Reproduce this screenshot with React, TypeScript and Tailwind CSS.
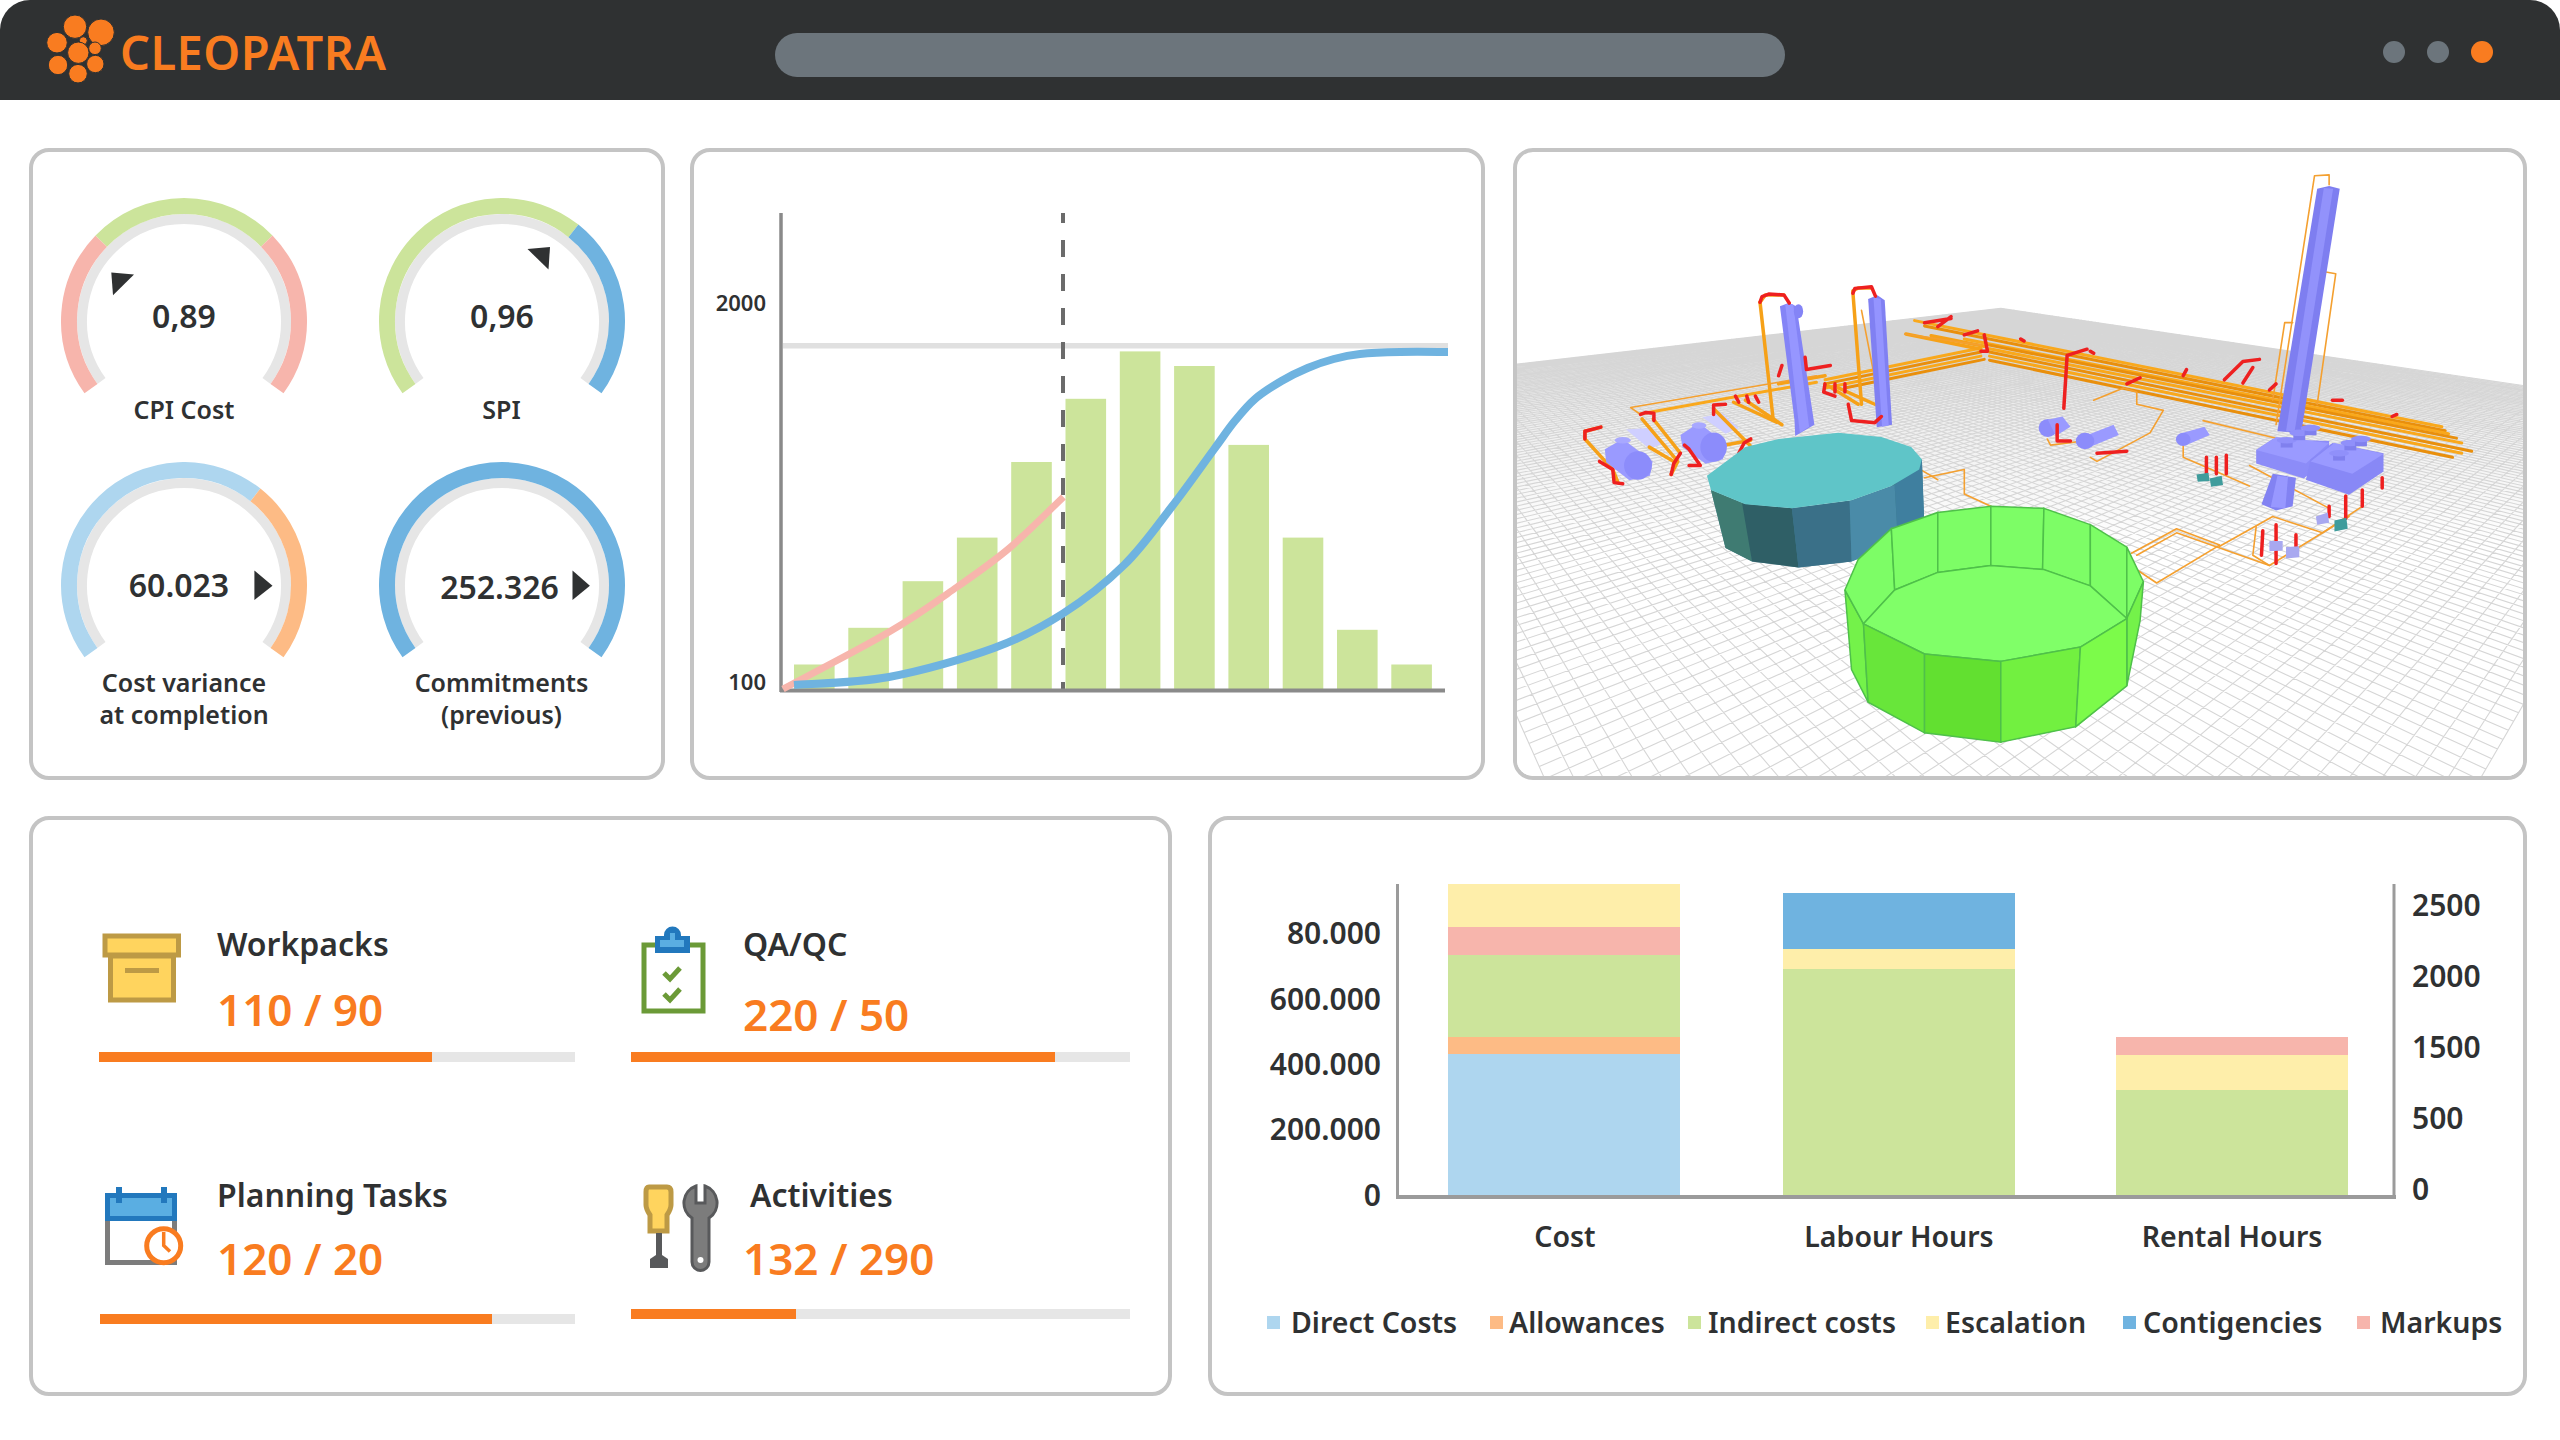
import React from "react";

const ORANGE = "#f97c20";
const GREEN = "#cce49b";
const PINK = "#f7b5ac";
const BLUE = "#6fb3e0";
const LIGHT_BLUE = "#aed6ef";
const PEACH = "#fdbb85";
const YELLOW = "#feeeaa";
const INK = "#2f3132";

const point = (r: number, deg: number) => {
  const t = (deg * Math.PI) / 180;
  return [130 - r * Math.cos(t), 123 - r * Math.sin(t)];
};

const arc = (r: number, from: number, to: number) => {
  const [x0, y0] = point(r, from);
  const [x1, y1] = point(r, to);
  return `M${x0} ${y0}A${r} ${r} 0 ${to - from > 180 ? 1 : 0} 1 ${x1} ${y1}`;
};

type GaugeProps = {
  segments: [number, number, string][];
  pointer: string;
  value: string;
  valueX: number;
  valueY: number;
  label: string[];
  labelClass: string;
};

function Gauge({ segments, pointer, value, valueX, valueY, label, labelClass }: GaugeProps) {
  return (
    <div className="w-[260px]">
      <svg width="260" height="196" viewBox="0 0 260 196" className="block">
        <path d={arc(102, -36, 216)} fill="none" stroke="#e6e6e6" strokeWidth="10" />
        {segments.map(([a, b, c]) => (
          <path key={a} d={arc(115, a, b)} fill="none" stroke={c} strokeWidth="16" />
        ))}
        <polygon points={pointer} fill={INK} />
        <text x={valueX} y={valueY} textAnchor="middle" dominantBaseline="central" className="text-[32px] font-semibold fill-[#2f3132]">
          {value}
        </text>
      </svg>
      <div className={`text-center text-[25px] leading-[32px] font-semibold text-[#2f3132] ${labelClass}`}>
        {label.map((l) => (
          <div key={l}>{l}</div>
        ))}
      </div>
    </div>
  );
}

function GaugePanel() {
  return (
    <section className="w-[636px] h-[632px] shrink-0 border-4 border-[#c4c4c4] rounded-[20px] pt-[46px] pl-[21px]">
      <div className="grid grid-cols-[260px_260px] gap-x-[57.5px] gap-y-[37px]">
        <Gauge
          segments={[[-36, 44, PINK], [44, 136, GREEN], [136, 216, PINK]]}
          pointer="57.3,74.5 80,76.5 59,97.3"
          value="0,89"
          valueX={130}
          valueY={117}
          label={["CPI Cost"]}
          labelClass="-mt-[1px]"
        />
        <Gauge
          segments={[[-36, 128.4, GREEN], [128.4, 216, BLUE]]}
          pointer="155.5,51 178,49 176.5,71.6"
          value="0,96"
          valueX={130}
          valueY={117}
          label={["SPI"]}
          labelClass="-mt-[1px]"
        />
        <Gauge
          segments={[[-36, 128.4, LIGHT_BLUE], [128.4, 216, PEACH]]}
          pointer="200.4,108.6 218.5,123.7 200.4,138"
          value="60.023"
          valueX={125}
          valueY={122}
          label={["Cost variance", "at completion"]}
          labelClass="mt-[8px]"
        />
        <Gauge
          segments={[[-36, 216, BLUE]]}
          pointer="200.5,108.6 217.9,123.7 200.5,138"
          value="252.326"
          valueX={127.5}
          valueY={124}
          label={["Commitments", "(previous)"]}
          labelClass="mt-[8px]"
        />
      </div>
    </section>
  );
}

// catmull-rom through the points, good enough for the s-curves
const smooth = (pts: number[][]) => {
  let d = `M${pts[0][0]} ${pts[0][1]}`;
  for (let i = 0; i < pts.length - 1; i++) {
    const p0 = pts[i - 1] || pts[i];
    const p1 = pts[i];
    const p2 = pts[i + 1];
    const p3 = pts[i + 2] || p2;
    d += `C${p1[0] + (p2[0] - p0[0]) / 6} ${p1[1] + (p2[1] - p0[1]) / 6} ${p2[0] - (p3[0] - p1[0]) / 6} ${p2[1] - (p3[1] - p1[1]) / 6} ${p2[0]} ${p2[1]}`;
  }
  return d;
};

const curveTops = [664.5, 627.8, 581.2, 537.6, 462, 398.8, 351.4, 366, 444.9, 537.6, 629.8, 664.5];

function CurvePanel() {
  return (
    <section className="w-[795px] h-[632px] shrink-0 ml-[25px] border-4 border-[#c4c4c4] rounded-[20px]">
      <svg viewBox="694 152 787 624" className="block w-full h-full">
        <rect x="783" y="343" width="665" height="5.5" fill="#e0e0e0" />
        {curveTops.map((top, i) => (
          <rect key={i} x={794 + i * 54.3} y={top} width="40.6" height={690 - top} fill={GREEN} />
        ))}
        <path d="M1063 213V690" stroke="#6b6b6b" strokeWidth="4" strokeDasharray="17 17" strokeDashoffset="7" />
        <path d="M781 213V692" stroke="#8a8a8a" strokeWidth="3.5" />
        <path d="M780 690.5H1445" stroke="#8a8a8a" strokeWidth="4" />
        <path
          d={smooth([[783, 689], [889, 632], [957, 587], [1009.5, 548], [1063.4, 497]])}
          fill="none"
          stroke={PINK}
          strokeWidth="7"
        />
        <path
          d={smooth([[794, 685], [889, 677], [994, 648], [1063, 613.5], [1124.6, 564.5], [1171.6, 507], [1213.5, 450], [1234.4, 421.6], [1255, 399], [1281.5, 381], [1307.6, 368], [1333.8, 359], [1360, 354], [1400, 352], [1448, 352]])}
          fill="none"
          stroke={BLUE}
          strokeWidth="8"
        />
        <text x="766" y="302" textAnchor="end" dominantBaseline="central" className="text-[22px] font-semibold fill-[#2f3132]">2000</text>
        <text x="766" y="680.5" textAnchor="end" dominantBaseline="central" className="text-[22px] font-semibold fill-[#2f3132]">100</text>
      </svg>
    </section>
  );
}

// floor plane: unit square to the four corners of the slab
const project = (() => {
  const [x0, y0, x1, y1, x2, y2, x3, y3] = [755, 415, 1800, 666, 680, 3800, -200, 593.5];
  const sx = x0 - x1 + x2 - x3;
  const sy = y0 - y1 + y2 - y3;
  const dx1 = x1 - x2;
  const dx2 = x3 - x2;
  const dy1 = y1 - y2;
  const dy2 = y3 - y2;
  const den = dx1 * dy2 - dx2 * dy1;
  const g = (sx * dy2 - dx2 * sy) / den;
  const h = (dx1 * sy - sx * dy1) / den;
  return (u: number, v: number) => {
    const w = g * u + h * v + 1;
    return [
      ((x1 - x0 + g * x1) * u + (x3 - x0 + h * x3) * v + x0) / w,
      ((y1 - y0 + g * y1) * u + (y3 - y0 + h * y3) * v + y0) / w,
    ];
  };
})();

const GRID = 130;
const gridPath = Array.from({ length: GRID + 1 }, (_, i) => {
  const t = i / GRID;
  const a = project(t, 0);
  const b = project(t, 1);
  const c = project(0, t);
  const d = project(1, t);
  return `M${a[0]} ${a[1]}L${b[0]} ${b[1]}M${c[0]} ${c[1]}L${d[0]} ${d[1]}`;
}).join("");

const mainPipes = [
  "M625 445L1420 705",
  "M640 458L1425 715",
  "M700 490L1430 722",
  "M738 505L1442 733",
  "M738 514L1450 745",
  "M738 522L1465 765",
  "M738 532L1450 770",
  "M738 542L1436 780",
  "M725 512L490 590",
  "M725 522L490 600",
  "M725 532L490 610",
  "M730 540L520 610",
  "M477 596L211 674",
];

const thickPipes = [
  "M612 478L725 515",
  "M650 482L730 508",
  "M490 580L420 600",
  "M152 706L128 716L128 735L170 810L178 842",
  "M214 686L268 790L258 822",
  "M231 686L271 768",
  "M322 661L377 751",
  "M352 645L417 694",
  "M370 640L425 700",
  "M490 600L540 650",
  "M510 610L565 650",
  "M392 400L412 690",
  "M532 375L545 650",
  "M392 400L400 382L428 382",
  "M532 372L540 365L560 365",
  "M225 755L262 790",
  "M340 750L378 738",
];

const thinPipes = [
  "M1170 700L1228 90L1250 88L1250 112",
  "M1232 650L1260 330L1245 326",
  "M1165 640L1183 450L1195 450",
  "M725 505L610 478",
  "M477 580L197 658L212 675",
  "M640 830L700 810L700 870L740 900",
  "M636 812L660 835",
  "M952 1015L1020 955L1085 995L990 1088L955 1050",
  "M960 1020L1020 965L1160 1045L1280 925",
  "M1165 925L1085 998",
  "M1060 690L1175 735",
  "M1030 745L1030 780L1130 850",
  "M1130 800L1250 905",
  "M1165 925L1240 965L1300 900",
  "M895 640L940 610L960 620L960 650L1000 665L980 720L900 790L890 780",
  "M825 735L830 750L880 740",
  "M1140 950L1135 1020L1160 1045",
  "M445 460L470 690",
  "M545 420L575 670",
];

const redPipes = [
  "M152 706L128 716L128 735",
  "M150 790L170 810L172 842L185 845",
  "M212 675L220 670L232 672L232 690",
  "M258 822L262 795L272 770",
  "M285 800L302 800L285 760L278 750",
  "M378 735L368 745L360 770",
  "M322 675L322 652L340 650",
  "M355 630L360 645M372 630L375 645M385 630L390 645",
  "M392 400L395 386L405 380L428 382L436 402",
  "M532 378L535 366L560 362L566 385",
  "M490 600L488 620L505 630M505 600L505 620M520 600L520 620",
  "M525 650L530 690L565 695L575 680",
  "M460 535L462 565L498 555",
  "M420 580L425 555",
  "M640 450L680 440M660 460L680 435",
  "M730 480L735 520L725 520",
  "M850 660L855 530L885 515",
  "M1092 590L1120 545L1145 540",
  "M1120 598L1135 560",
  "M1160 615L1170 600",
  "M945 600L965 585",
  "M1030 580L1035 565",
  "M1255 640L1270 640",
  "M1345 680L1352 675",
  "M840 700L840 740L860 740",
  "M900 770L945 765",
  "M1065 780L1065 820M1080 780L1080 820M1095 775L1095 820",
  "M1150 960L1148 1020M1170 945L1170 1040M1200 970L1200 1020",
  "M1250 900L1250 925M1275 875L1275 930M1300 860L1300 900M1330 830L1330 855",
  "M700 480L720 470M790 495L785 490M895 525L890 520",
];

const Line = ({ d, color, width }: { d: string; color: string; width: number }) => (
  <path d={d} fill="none" stroke={color} strokeWidth={width} strokeLinejoin="round" strokeLinecap="round" vectorEffect="non-scaling-stroke" />
);

const Face = ({ points, fill }: { points: string; fill: string }) => (
  <polygon points={points} fill={fill} stroke="#4fc04a" strokeWidth="1.5" vectorEffect="non-scaling-stroke" />
);

function PlantPanel() {
  return (
    <section className="w-[1014px] h-[632px] shrink-0 ml-[28px] border-4 border-[#c4c4c4] rounded-[20px] overflow-hidden">
      {/* traced in a 1568-wide frame, hence the stretched viewBox */}
      <svg viewBox="25.6 31.85 1516.7 1529" preserveAspectRatio="none" className="block w-full h-full">
        <defs>
          <linearGradient id="floorFade" x1="0" y1="415" x2="0" y2="1000" gradientUnits="userSpaceOnUse">
            <stop offset="0" stopColor="#d6d6d6" />
            <stop offset="0.4" stopColor="#ececec" />
            <stop offset="1" stopColor="#ffffff" />
          </linearGradient>
        </defs>
        <polygon points="755,415 1800,666 1800,1600 -200,1600 -200,593.5" fill="url(#floorFade)" />
        <path d={gridPath} fill="none" stroke="#d6d6d6" strokeWidth="1.1" vectorEffect="non-scaling-stroke" />

        <polygon points="190,712 225,708 246,745 226,760" fill="#cfcfff" />
        <polygon points="305,682 335,672 360,708 340,722" fill="#cfcfff" />
        {mainPipes.map((d, i) => (
          <Line key={d} d={d} color={i % 2 ? "#e98f0c" : "#f9a81c"} width={3} />
        ))}
        {thickPipes.map((d) => (
          <Line key={d} d={d} color="#f6a118" width={3.5} />
        ))}
        {thinPipes.map((d) => (
          <Line key={d} d={d} color="#f4a030" width={1.6} />
        ))}

        {/* columns */}
        <polygon points="422,410 435,402 447,410 474,700 445,728 444,690" fill="#8484f6" />
        <polygon points="430,405 442,405 466,705 452,720" fill="#9696ff" />
        <ellipse cx="450" cy="422" rx="7" ry="17" fill="#8484f6" />
        <polygon points="555,392 569,383 580,395 591,700 568,706" fill="#8080f2" />
        <polygon points="563,388 574,392 586,702 576,705" fill="#9494ff" />
        <polygon points="1232,122 1250,115 1266,122 1208,720 1172,716" fill="#7e7ef0" />
        <polygon points="1242,120 1256,122 1198,716 1185,716" fill="#9292fb" />
        <polygon points="1165,820 1200,830 1195,900 1170,910 1148,895" fill="#8282f2" />
        <polygon points="1172,825 1188,828 1184,905 1162,902" fill="#9898ff" />

        {/* vessels */}
        <polygon points="158,760 185,735 230,790 226,825 195,836 160,792" fill="#9a9aff" />
        <ellipse cx="208" cy="800" rx="21" ry="35" fill="#8c8cfb" />
        <ellipse cx="185" cy="738" rx="12" ry="8" fill="#a8a8ff" />
        <polygon points="272,725 300,695 342,750 336,785 310,796 275,755" fill="#9a9aff" />
        <ellipse cx="322" cy="755" rx="20" ry="36" fill="#8c8cfb" />
        <ellipse cx="300" cy="702" rx="11" ry="8" fill="#a8a8ff" />
        <ellipse cx="826" cy="708" rx="14" ry="22" fill="#8c8cfb" />
        <polygon points="826,688 848,680 860,705 838,728" fill="#9a9aff" />
        <polygon points="870,735 925,700 933,725 885,758" fill="#9a9aff" />
        <ellipse cx="882" cy="740" rx="14" ry="20" fill="#8c8cfb" />
        <polygon points="1030,720 1062,705 1070,725 1035,750" fill="#9a9aff" />
        <ellipse cx="1030" cy="736" rx="11" ry="16" fill="#8c8cfb" />

        {/* cooler boxes */}
        <polygon points="1140,762 1165,735 1250,740 1250,775 1212,832 1140,795" fill="#8c8cf8" />
        <polygon points="1140,762 1215,795 1250,745 1170,730" fill="#9a9aff" />
        <polygon points="1222,785 1255,745 1332,770 1332,815 1280,872 1215,835" fill="#8888f6" />
        <polygon points="1222,790 1285,820 1332,772 1258,745" fill="#9a9aff" />
        {[[1186, 738], [1205, 720], [1222, 708], [1265, 770], [1282, 745], [1298, 735]].map(([x, y]) => (
          <g key={x}>
            <rect x={x - 9} y={y} width="18" height="18" fill="#8080ee" />
            <ellipse cx={x} cy={y} rx="15" ry="8" fill="#9090fa" />
          </g>
        ))}

        {redPipes.map((d) => (
          <Line key={d} d={d} color="#ee2020" width={3.5} />
        ))}

        {/* pumps */}
        <polygon points="1050,822 1068,818 1070,838 1052,840" fill="#3f9c9c" />
        <polygon points="1070,832 1088,825 1090,848 1072,852" fill="#3f9c9c" />
        <polygon points="1258,935 1276,928 1278,955 1258,962" fill="#3f9c9c" />
        <polygon points="1160,985 1180,985 1180,1008 1160,1010" fill="#a8a8f0" />
        <polygon points="1185,1000 1205,998 1205,1025 1185,1028" fill="#a8a8f0" />
        <polygon points="1230,925 1248,915 1250,940 1232,945" fill="#a8a8f0" />

        {/* teal tank */}
        <polygon points="318,860 340,1002 380,1035 450,1050 530,1035 640,960 636,785 590,850 530,885 440,905 370,895" fill="#3f7f90" />
        <polygon points="318,860 370,895 380,1035 340,1002" fill="#3f7b72" />
        <polygon points="365,893 440,905 450,1050 380,1035" fill="#2f5f66" />
        <polygon points="440,905 527,887 530,1035 450,1050" fill="#3a7088" />
        <polygon points="527,887 595,848 600,990 530,1035" fill="#4a8ba8" />
        <polygon points="595,848 636,785 640,960 600,990" fill="#3f7f9f" />
        <polygon points="312,825 370,755 420,735 510,720 575,730 620,755 636,785 632,810 590,850 530,885 440,905 370,895 318,860" fill="#5fc5c8" />

        {/* green tank */}
        <polygon points="520,1105 540,1030 590,955 660,915 740,900 820,905 890,945 945,1000 970,1085 965,1180 945,1340 870,1440 755,1478 640,1455 555,1380 530,1300" fill="#7cfc5c" />
        <Face points="520,1105 548,1188 555,1380 530,1300" fill="#74f24a" />
        <Face points="520,1105 540,1030 590,955 595,1105 548,1188" fill="#7dfd66" />
        <Face points="590,955 660,915 660,1062 595,1105" fill="#7dfd66" />
        <Face points="660,915 740,900 740,1045 660,1062" fill="#7dfd66" />
        <Face points="740,900 820,905 818,1055 740,1045" fill="#7dfd66" />
        <Face points="820,905 890,945 890,1095 818,1055" fill="#7dfd66" />
        <Face points="890,945 945,1000 945,1175 890,1095" fill="#7dfd66" />
        <Face points="945,1000 970,1085 945,1175" fill="#7dfd66" />
        <Face points="970,1085 965,1180 945,1340 945,1175" fill="#74f24a" />
        <Face points="548,1188 595,1105 660,1062 740,1045 820,1055 890,1095 945,1175 875,1245 755,1280 640,1262" fill="#80ff68" />
        <Face points="548,1188 640,1262 640,1455 555,1380" fill="#68e63a" />
        <Face points="640,1262 755,1280 755,1478 640,1455" fill="#62e030" />
        <Face points="755,1280 875,1245 868,1440 755,1478" fill="#72f040" />
        <Face points="875,1245 945,1175 945,1340 868,1440" fill="#7cfb4a" />
      </svg>
    </section>
  );
}

type StatProps = {
  icon: React.ReactNode;
  iconBox: string;
  iconWidth: number;
  title: string;
  value: string;
  percent: number;
  titleClass?: string;
  valueClass: string;
  barClass: string;
};

function Stat({ icon, iconBox, iconWidth, title, value, percent, titleClass, valueClass, barClass }: StatProps) {
  return (
    <div>
      <div className="flex items-start">
        <svg width={iconWidth} height="110" viewBox={iconBox} className="block shrink-0">
          {icon}
        </svg>
        <div>
          <div className={`text-[32px] leading-[40px] font-semibold text-[#2f3132] ${titleClass || ""}`}>{title}</div>
          <div className={`text-[44px] leading-[52px] font-semibold text-[#f97c20] whitespace-pre ${valueClass}`}>{value}</div>
        </div>
      </div>
      <div className={`h-[10px] bg-[#e6e6e6] ${barClass}`}>
        <div className="h-full bg-[#f97c20]" style={{ width: `${percent}%` }} />
      </div>
    </div>
  );
}

const BoxIcon = (
  <g stroke="#bd9a45" strokeWidth="5" fill="#ffd45e">
    <rect x="110.5" y="957" width="63" height="44" />
    <rect x="105" y="937" width="73.5" height="19" />
    <rect x="125" y="969" width="34" height="5" fill="#bd9a45" stroke="none" />
  </g>
);

const ClipboardIcon = (
  <g>
    <rect x="644" y="946" width="59" height="66" fill="#fff" stroke="#6b9a37" strokeWidth="5" />
    <path d="M664 937V936A8.5 8.5 0 0 1 681 936V937H690V954H655V937Z" fill="#2278bd" />
    <path d="M670 941V934H675V941H684V948H660V941Z" fill="#5aaee2" />
    <path d="M664 974L670 980L680 969M664 995L670 1001L680 990" fill="none" stroke="#6b9a37" strokeWidth="5" />
  </g>
);

const CalendarIcon = (
  <g>
    <path d="M107.5 1217V1262.5H174.5V1217" fill="#fff" stroke="#7c7c7c" strokeWidth="5" />
    <rect x="107.5" y="1195.5" width="67" height="23" fill="#5aaee2" stroke="#2278bd" strokeWidth="5" />
    <rect x="116" y="1187" width="6" height="16" fill="#2278bd" />
    <rect x="161" y="1187" width="6" height="16" fill="#2278bd" />
    <circle cx="163.7" cy="1245.7" r="17" fill="#fff" stroke="#f97c20" strokeWidth="5" />
    <path d="M163.7 1232V1245.5L170 1251.5" fill="none" stroke="#f97c20" strokeWidth="3.5" />
  </g>
);

const ToolsIcon = (
  <g>
    <path d="M649 1187H667Q671 1187 671 1192V1205Q671 1209 667 1215V1231H650V1215Q646 1209 646 1205V1192Q646 1187 649 1187Z" fill="#ffd45e" stroke="#bd9a45" strokeWidth="5" />
    <rect x="656" y="1233" width="6" height="24" fill="#58595b" />
    <path d="M659 1253L668 1259V1268H650V1259Z" fill="#58595b" />
    <path d="M696 1186V1203H705V1186A18 18 0 0 1 709 1218V1262A8.5 8.5 0 0 1 692 1262V1218A18 18 0 0 1 696 1186Z" fill="#7c7c7c" stroke="#58595b" strokeWidth="3" />
    <circle cx="700.5" cy="1260" r="3" fill="#fff" />
  </g>
);

function StatsPanel() {
  return (
    <section className="w-[1143px] h-[580px] shrink-0 border-4 border-[#c4c4c4] rounded-[20px] pt-[104px] pl-[66px]">
      <div className="grid grid-cols-[476px_498.5px] gap-x-[56px] gap-y-[113px]">
        <Stat icon={BoxIcon} iconBox="99 925 118 110" iconWidth={118} title="Workpacks" value="110 / 90" percent={70} valueClass="mt-[19px]" barClass="mt-[17px]" />
        <Stat icon={ClipboardIcon} iconBox="631 925 112 110" iconWidth={112} title="QA/QC" value="220 / 50" percent={85} valueClass="mt-[24px]" barClass="mt-[12px]" />
        <Stat icon={CalendarIcon} iconBox="99 1175 118 110" iconWidth={118} title="Planning Tasks" value="120 / 20" percent={82.6} valueClass="mt-[16.5px]" barClass="mt-[28.5px] ml-px" />
        <Stat icon={ToolsIcon} iconBox="631 1175 112 110" iconWidth={112} title="Activities" value="132 / 290" percent={33} titleClass="ml-[7px]" valueClass="mt-[16.5px]" barClass="mt-[24px]" />
      </div>
    </section>
  );
}

const stacks: { x: number; parts: [number, number, string][] }[] = [
  {
    x: 1448,
    parts: [
      [884, 927, YELLOW],
      [927, 955, PINK],
      [955, 1037, GREEN],
      [1037, 1054, PEACH],
      [1054, 1195, LIGHT_BLUE],
    ],
  },
  {
    x: 1783,
    parts: [
      [893, 949, BLUE],
      [949, 969, YELLOW],
      [969, 1195, GREEN],
    ],
  },
  {
    x: 2116,
    parts: [
      [1037, 1055, PINK],
      [1055, 1090, YELLOW],
      [1090, 1195, GREEN],
    ],
  },
];

const legend = [
  { name: "Direct Costs", color: LIGHT_BLUE, width: "w-[223px]", gap: "gap-[11px]" },
  { name: "Allowances", color: PEACH, width: "w-[198px]", gap: "gap-[6px]" },
  { name: "Indirect costs", color: GREEN, width: "w-[238px]", gap: "gap-[7px]" },
  { name: "Escalation", color: YELLOW, width: "w-[197px]", gap: "gap-[6px]" },
  { name: "Contigencies", color: BLUE, width: "w-[234px]", gap: "gap-[7px]" },
  { name: "Markups", color: PINK, width: "w-[150px]", gap: "gap-[10px]" },
];

function CostPanel() {
  const axis = "text-[30px] font-semibold fill-[#2f3132]";
  return (
    <section className="w-[1319px] h-[580px] shrink-0 ml-[36px] border-4 border-[#c4c4c4] rounded-[20px]">
      <svg width="1310" height="442" viewBox="1212 820 1310 442" className="block">
        {stacks.map((s) =>
          s.parts.map(([top, bottom, color]) => (
            <rect key={s.x + top} x={s.x} y={top} width="232" height={bottom - top} fill={color} />
          ))
        )}
        <path d="M1397.5 884V1197" stroke="#9b9b9b" strokeWidth="3" />
        <path d="M2394 884V1197" stroke="#9b9b9b" strokeWidth="3" />
        <path d="M1396 1197H2396" stroke="#9b9b9b" strokeWidth="4" />
        {[["80.000", 932.5], ["600.000", 998], ["400.000", 1063], ["200.000", 1128.5], ["0", 1194]].map(([t, y]) => (
          <text key={t} x="1381" y={y} textAnchor="end" dominantBaseline="central" className={axis}>{t}</text>
        ))}
        {[["2500", 904.5], ["2000", 975], ["1500", 1046.5], ["500", 1117], ["0", 1188.5]].map(([t, y]) => (
          <text key={t} x="2412" y={y} dominantBaseline="central" className={axis}>{t}</text>
        ))}
        {[["Cost", 1565], ["Labour Hours", 1899], ["Rental Hours", 2232]].map(([t, x]) => (
          <text key={t} x={x} y="1236" textAnchor="middle" dominantBaseline="central" className="text-[28.5px] font-semibold fill-[#2f3132]">{t}</text>
        ))}
      </svg>
      <div className="flex mt-[40px] pl-[55px]">
        {legend.map((l) => (
          <div key={l.name} className={`flex items-center shrink-0 ${l.width} ${l.gap}`}>
            <span className="w-[13px] h-[13px] shrink-0" style={{ backgroundColor: l.color }} />
            <span className="text-[28.5px] leading-[40px] font-semibold text-[#2f3132] whitespace-nowrap">{l.name}</span>
          </div>
        ))}
      </div>
    </section>
  );
}

function Logo() {
  const dots = [
    [75, 26.7, 11.7],
    [101, 32.3, 13.3],
    [57, 42.7, 10.3],
    [83.3, 40.7, 4],
    [95, 48.3, 6.3],
    [78.3, 52.7, 10.7],
    [58, 65, 9.7],
    [95.3, 64, 8.7],
    [78, 73.7, 9.3],
  ];
  return (
    <svg width="76" height="100" viewBox="44 0 76 100" className="block shrink-0 -mt-[4px]">
      {dots.map(([x, y, r]) => (
        <circle key={x} cx={x} cy={y} r={r} fill={ORANGE} stroke={INK} strokeWidth="1" />
      ))}
    </svg>
  );
}

export default function App() {
  return (
    <div className="w-[2560px] h-[1440px] bg-white overflow-hidden font-['Noto_Sans',sans-serif]">
      <header className="h-[100px] bg-[#2f3132] rounded-t-[30px] flex items-center pt-[4px] pl-[44px] pr-[67px]">
        <div className="w-[731px] flex items-center">
          <Logo />
          <span className="text-[47px] font-semibold leading-none tracking-[0.01em] text-[#f97c20]">CLEOPATRA</span>
        </div>
        <div className="w-[1010px] h-[44px] mt-[6px] rounded-full bg-[#6c757c]" />
        <div className="ml-auto flex gap-[22px]">
          <span className="w-[22px] h-[22px] rounded-full bg-[#6c757c]" />
          <span className="w-[22px] h-[22px] rounded-full bg-[#6c757c]" />
          <span className="w-[22px] h-[22px] rounded-full bg-[#f97c20]" />
        </div>
      </header>
      <main className="pt-[48px] pl-[29px]">
        <div className="flex">
          <GaugePanel />
          <CurvePanel />
          <PlantPanel />
        </div>
        <div className="flex mt-[36px]">
          <StatsPanel />
          <CostPanel />
        </div>
      </main>
    </div>
  );
}
